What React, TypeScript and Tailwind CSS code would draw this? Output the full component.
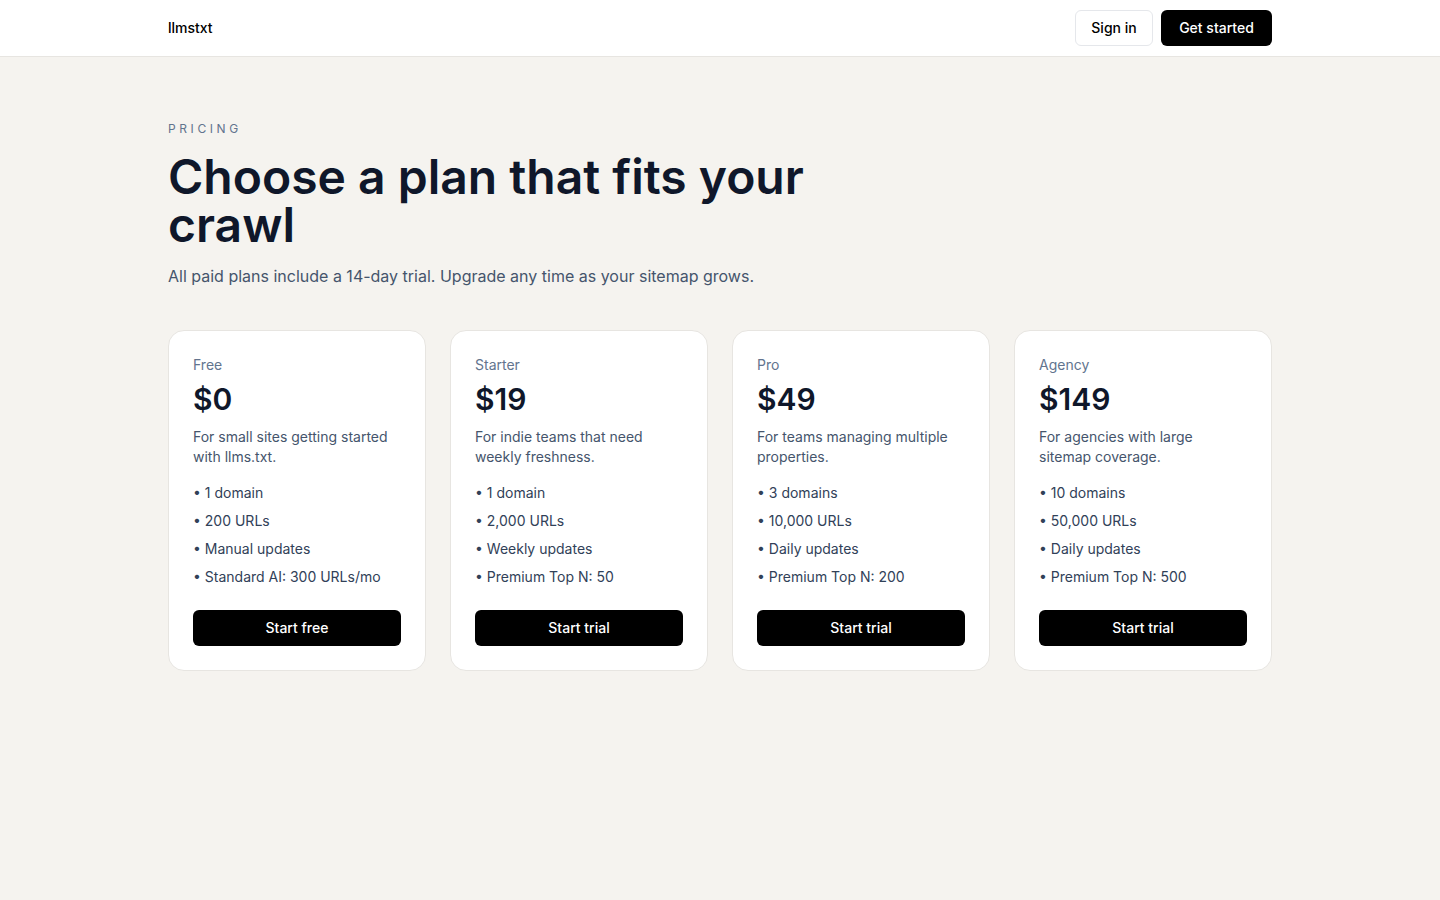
const plans = [
  {
    name: "Free",
    price: "$0",
    desc: "For small sites getting started with llms.txt.",
    features: ["1 domain", "200 URLs", "Manual updates", "Standard AI: 300 URLs/mo"],
    cta: "Start free",
  },
  {
    name: "Starter",
    price: "$19",
    desc: "For indie teams that need weekly freshness.",
    features: ["1 domain", "2,000 URLs", "Weekly updates", "Premium Top N: 50"],
    cta: "Start trial",
  },
  {
    name: "Pro",
    price: "$49",
    desc: "For teams managing multiple properties.",
    features: ["3 domains", "10,000 URLs", "Daily updates", "Premium Top N: 200"],
    cta: "Start trial",
  },
  {
    name: "Agency",
    price: "$149",
    desc: "For agencies with large sitemap coverage.",
    features: ["10 domains", "50,000 URLs", "Daily updates", "Premium Top N: 500"],
    cta: "Start trial",
  },
];

export default function App() {
  return (
    <div className="min-h-screen bg-[#f5f3ef] font-['Inter',sans-serif] text-slate-900">
      <header className="h-[57px] border-b border-[#e7e5e1] bg-white">
        <div className="mx-auto flex h-14 max-w-[1104px] items-center justify-between">
          <span className="text-sm font-medium text-black">llmstxt</span>
          <div className="flex items-center gap-2">
            <button className="h-9 w-[78px] rounded-md border border-[#e5e7eb] bg-white text-sm font-medium text-black">
              Sign in
            </button>
            <button className="h-9 w-[111px] rounded-md bg-black text-sm font-medium text-white">
              Get started
            </button>
          </div>
        </div>
      </header>

      <main className="mx-auto max-w-[1104px] pt-16">
        <p className="text-xs uppercase leading-4 tracking-[0.3em] text-slate-500">Pricing</p>
        <h1 className="mt-4 max-w-[700px] text-5xl font-semibold leading-[48px] text-[#0f172a]">
          Choose a plan that fits your crawl
        </h1>
        <p className="mt-[15px] text-base leading-6 text-slate-600">
          All paid plans include a 14-day trial. Upgrade any time as your sitemap grows.
        </p>

        <div className="mt-[42px] grid grid-cols-4 gap-6">
          {plans.map((p) => (
            <div key={p.name} className="rounded-2xl border border-[#e7e5e1] bg-white p-6">
              <p className="text-sm leading-5 text-slate-500">{p.name}</p>
              <p className="mt-1.5 text-3xl font-semibold leading-9 text-[#0f172a]">{p.price}</p>
              <p className="mt-2.5 text-sm leading-5 text-slate-600">{p.desc}</p>
              <ul className="mt-4 space-y-2 text-sm leading-5 text-slate-700">
                {p.features.map((f) => (
                  <li key={f}>• {f}</li>
                ))}
              </ul>
              <button className="mt-[23px] h-9 w-full rounded-md bg-black text-sm font-medium text-white">
                {p.cta}
              </button>
            </div>
          ))}
        </div>
      </main>
    </div>
  );
}
